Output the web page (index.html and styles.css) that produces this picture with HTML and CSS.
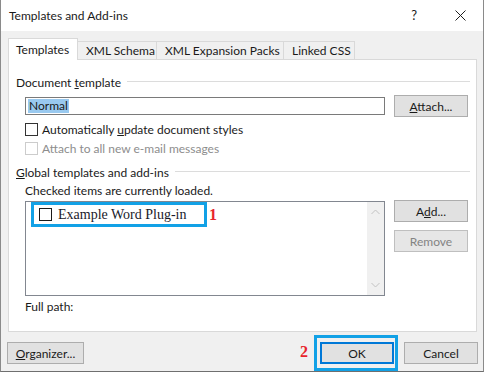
FILE: index.html
```html
<!DOCTYPE html>
<html lang="en">
<head>
  <meta charset="UTF-8">
  <title>Templates and Add-ins</title>
  <link rel="stylesheet" href="styles.css">
</head>
<body>
  <div class="window">
    <div class="titlebar">
      <span class="title">Templates and Add-ins</span>
      <span class="help">?</span>
      <svg class="close" width="11" height="11" viewBox="0 0 11 11">
        <path d="M0.5 0.5 L10.5 10.5 M10.5 0.5 L0.5 10.5" stroke="#1e1e1e" stroke-width="1"/>
      </svg>
    </div>

    <div class="content">
      <div class="tabs">
        <div class="tab active tab-templates">Templates</div>
        <div class="tab tab-schema">XML Schema</div>
        <div class="tab tab-packs">XML Expansion Packs</div>
        <div class="tab tab-css">Linked CSS</div>
      </div>

      <div class="panel">
        <div class="group-head">
          <span>Document <u>t</u>emplate</span>
          <span class="rule"></span>
        </div>

        <div class="template-row">
          <div class="textbox"><span class="selected">Normal</span></div>
          <button class="btn"><u>A</u>ttach...</button>
        </div>

        <label class="check first">
          <span class="box"></span>
          <span>Automatically <u>u</u>pdate document styles</span>
        </label>
        <label class="check disabled">
          <span class="box"></span>
          <span>Attach to all new e-mail messages</span>
        </label>

        <div class="group-head global">
          <span><u>G</u>lobal templates and add-ins</span>
          <span class="rule"></span>
        </div>
        <div class="hint">Checked items are currently loaded.</div>

        <div class="list-row">
          <div class="listbox">
            <div class="items">
              <div class="item-line">
                <div class="item">
                  <span class="box"></span>
                  <span class="item-name">Example Word Plug-in</span>
                </div>
                <span class="step">1</span>
              </div>
            </div>
            <div class="scrollbar">
              <svg width="9" height="6" viewBox="0 0 9 6"><path d="M0.5 5 L4.5 1 L8.5 5" fill="none" stroke="#c2c2c2"/></svg>
              <svg width="9" height="6" viewBox="0 0 9 6"><path d="M0.5 1 L4.5 5 L8.5 1" fill="none" stroke="#c2c2c2"/></svg>
            </div>
          </div>
          <div class="side-buttons">
            <button class="btn">A<u>d</u>d...</button>
            <button class="btn" disabled>Remove</button>
          </div>
        </div>

        <div class="full-path">Full path:</div>
      </div>

      <div class="footer">
        <button class="btn organizer"><u>O</u>rganizer...</button>
        <div class="footer-right">
          <div class="ok-wrap">
            <span class="step step-two">2</span>
            <button class="btn default">OK</button>
          </div>
          <button class="btn">Cancel</button>
        </div>
      </div>
    </div>
  </div>
</body>
</html>
```

FILE: styles.css
```css
body {
  margin: 0;
  background-color: #ffffff;
  font-family: Lato, "Noto Sans", sans-serif;
  font-size: 12px;
  color: #1a1a1a;
}
.window {
  width: 482px;
  height: 371px;
  border-left: 1px solid #8a8a8a;
  border-right: 1px solid #8a8a8a;
  border-bottom: 1px solid #6f6f6f;
  background-color: #f0f0f0;
}
.titlebar {
  height: 31px;
  background-color: #ffffff;
  display: flex;
  align-items: center;
  padding-left: 8px;
}
.title {
  flex: 1;
  font-size: 12px;
  margin-top: -1px;
}
.help {
  font-size: 13px;
  margin-right: 38px;
  margin-top: -1px;
}
.close {
  margin-right: 17px;
  margin-top: -1px;
}
.content {
  padding: 7px 6px 0 7px;
}
.tabs {
  display: flex;
  align-items: flex-end;
  height: 21px;
  position: relative;
  z-index: 1;
}
.tab {
  box-sizing: border-box;
  height: 18px;
  border: 1px solid #d9d9d9;
  border-bottom: none;
  margin-left: -1px;
  background-color: #f0f0f0;
  padding-left: 8px;
  line-height: 18px;
  white-space: nowrap;
}
.tab.active {
  height: 22px;
  margin-left: 0;
  margin-bottom: -1px;
  background-color: #ffffff;
  line-height: 22px;
  padding-left: 7px;
}
.tab-templates { width: 70px; }
.tab-schema { width: 80px; }
.tab-packs { width: 128px; }
.tab-css { width: 72px; }
.panel {
  box-sizing: border-box;
  height: 273px;
  background-color: #ffffff;
  border: 1px solid #d9d9d9;
  padding: 14px 6px 0 7px;
  display: flex;
  flex-direction: column;
}
.group-head {
  display: flex;
  align-items: center;
  height: 16px;
}
.group-head .rule {
  flex: 1;
  height: 1px;
  background-color: #dcdcdc;
  margin-left: 6px;
  margin-top: -1px;
}
.template-row {
  display: flex;
  align-items: center;
  margin-top: 5px;
  padding-left: 9px;
}
.textbox {
  box-sizing: border-box;
  width: 360px;
  height: 18px;
  border: 1px solid #7a7a7a;
  padding-left: 2px;
  display: flex;
  align-items: center;
  margin-right: 9px;
}
.selected {
  background-color: #99c9ef;
  line-height: 14px;
  padding: 0 1px;
}
.btn {
  box-sizing: border-box;
  width: 74px;
  height: 22px;
  background-color: #e1e1e1;
  border: 1px solid #adadad;
  font-family: Lato, "Noto Sans", sans-serif;
  font-size: 12px;
  color: #1a1a1a;
  padding: 0;
}
.btn:disabled {
  color: #838383;
  border-color: #bfbfbf;
  background-color: #e6e6e6;
}
.check {
  display: flex;
  align-items: center;
  height: 13px;
  margin-top: 6px;
  padding-left: 9px;
}
.box {
  box-sizing: border-box;
  width: 13px;
  height: 13px;
  border: 1px solid #333333;
  background-color: #ffffff;
  margin-right: 4px;
  flex-shrink: 0;
}
.check.disabled {
  color: #8d8d8d;
}
.check.disabled .box {
  border-color: #cccccc;
}
.group-head.global {
  margin-top: 9px;
}
.hint {
  height: 16px;
  line-height: 16px;
  margin-top: 3px;
  padding-left: 9px;
}
.list-row {
  display: flex;
  margin-top: 1px;
  padding-left: 9px;
}
.listbox {
  box-sizing: border-box;
  width: 360px;
  height: 95px;
  margin-top: 1px;
  margin-right: 9px;
  border: 1px solid #828790;
  display: flex;
}
.items {
  flex: 1;
}
.item-line {
  display: flex;
  align-items: center;
  padding-left: 5px;
}
.item {
  box-sizing: border-box;
  height: 25px;
  width: 176px;
  border: 3px solid #12a1e6;
  display: flex;
  align-items: center;
  padding-left: 5px;
}
.item .box {
  margin-right: 6px;
  border-color: #1a1a1a;
}
.item-name {
  font-family: "Liberation Serif", "DejaVu Serif", serif;
  font-size: 14px;
  color: #1a1a2a;
}
.step {
  font-family: "Liberation Serif", "DejaVu Serif", serif;
  font-weight: bold;
  font-size: 16px;
  color: #e8242c;
  margin-left: 2px;
}
.scrollbar {
  width: 17px;
  background-color: #f0f0f0;
  display: flex;
  flex-direction: column;
  justify-content: space-between;
  align-items: center;
  padding: 7px 0 7px;
}
.side-buttons {
  display: flex;
  flex-direction: column;
  gap: 8px;
}
.full-path {
  height: 16px;
  line-height: 16px;
  margin-top: 3px;
  padding-left: 9px;
}
.footer {
  display: flex;
  justify-content: space-between;
  align-items: center;
  margin-top: 10px;
}
.organizer {
  width: 77px;
  margin-left: -1px;
}
.footer-right {
  display: flex;
  gap: 10px;
  margin-right: -1px;
}
.ok-wrap {
  position: relative;
}
.ok-wrap::after {
  content: "";
  position: absolute;
  left: -6px;
  right: -4px;
  top: -7px;
  bottom: -7px;
  border: 3px solid #12a1e6;
}
.btn.default {
  border: 2px solid #0078d7;
}
.step-two {
  position: absolute;
  left: -20px;
  top: 1px;
  margin-left: 0;
}
```
